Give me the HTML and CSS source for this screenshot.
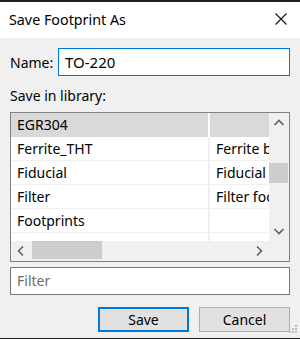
FILE: index.html
```html
<!DOCTYPE html>
<html lang="en">
<head>
    <meta charset="UTF-8">
    <title>Save Footprint As</title>
    <link rel="stylesheet" href="styles.css">
</head>
<body>
    <div class="dialog">
        <div class="titlebar">
            <span class="title">Save Footprint As</span>
            <svg class="close" width="12" height="12" viewBox="0 0 12 12">
                <path d="M0.5 0.5 L11.5 11.5 M11.5 0.5 L0.5 11.5" stroke="#111" stroke-width="1.1" fill="none"/>
            </svg>
        </div>
        <div class="content">
            <div class="name-row">
                <label>Name:</label>
                <div class="name-input">TO-220</div>
            </div>
            <div class="lib-label">Save in library:</div>
            <div class="listbox">
                <div class="rows">
                    <div class="row header"><span class="c1">EGR304</span><span class="c2"></span></div>
                    <div class="row"><span class="c1">Ferrite_THT</span><span class="c2">Ferrite bead</span></div>
                    <div class="row"><span class="c1">Fiducial</span><span class="c2">Fiducial marks</span></div>
                    <div class="row"><span class="c1">Filter</span><span class="c2">Filter footprints</span></div>
                    <div class="row"><span class="c1">Footprints</span><span class="c2"></span></div>
                    <div class="row"><span class="c1"></span><span class="c2"></span></div>
                </div>
                <div class="vscroll">
                    <svg width="20" height="20" viewBox="0 0 20 20"><polyline points="5.5,12 10,7.5 14.5,12" stroke="#606060" stroke-width="1.6" fill="none"/></svg>
                    <div class="vtrack"><div class="vthumb"></div></div>
                    <svg width="20" height="20" viewBox="0 0 20 20"><polyline points="5.5,8 10,12.5 14.5,8" stroke="#606060" stroke-width="1.6" fill="none"/></svg>
                </div>
                <div class="hscroll">
                    <svg width="20" height="20" viewBox="0 0 20 20"><polyline points="12,5.5 7.5,10 12,14.5" stroke="#606060" stroke-width="1.6" fill="none"/></svg>
                    <div class="htrack"><div class="hthumb"></div></div>
                    <svg width="20" height="20" viewBox="0 0 20 20"><polyline points="8,5.5 12.5,10 8,14.5" stroke="#606060" stroke-width="1.6" fill="none"/></svg>
                </div>
                <div class="corner"></div>
            </div>
            <div class="filter">Filter</div>
            <div class="buttons">
                <button class="btn default">Save</button>
                <button class="btn">Cancel</button>
            </div>
        </div>
        <svg class="grip" width="9" height="9" viewBox="0 0 9 9">
            <rect x="6" y="0" width="2" height="2" fill="#bcbcbc"/>
            <rect x="3" y="3" width="2" height="2" fill="#bcbcbc"/>
            <rect x="6" y="3" width="2" height="2" fill="#bcbcbc"/>
            <rect x="0" y="6" width="2" height="2" fill="#bcbcbc"/>
            <rect x="3" y="6" width="2" height="2" fill="#bcbcbc"/>
            <rect x="6" y="6" width="2" height="2" fill="#bcbcbc"/>
        </svg>
    </div>
</body>
</html>
```

FILE: styles.css
```css
body {
    margin: 0;
    font-family: 'Noto Sans', 'Open Sans', sans-serif;
    font-size: 14px;
    color: #000;
    background: #f0f0f0;
}
.dialog {
    position: relative;
    width: 300px;
    height: 339px;
    box-sizing: border-box;
    border-top: 2px solid #1e1e1e;
    border-bottom: 1px solid #1e1e1e;
    background: #f0f0f0;
}
.titlebar {
    height: 36px;
    background: white;
    display: flex;
    align-items: center;
    justify-content: space-between;
    padding: 0 13px 0 9px;
}
.title {
    font-size: 14.3px;
    margin-top: -2px;
}
.close {
    margin-top: -2px;
}
.content {
    padding: 10px 10px 0 10px;
}
.name-row {
    display: flex;
    align-items: center;
}
.name-row label {
    width: 48px;
}
.name-input {
    flex: 1;
    height: 28px;
    box-sizing: border-box;
    border: 1px solid #0078d7;
    background: white;
    padding: 0 0 0 6px;
    line-height: 26px;
    font-size: 15px;
}
.lib-label {
    margin-top: 10px;
    line-height: 20px;
    margin-bottom: 6px;
}
.listbox {
    height: 150px;
    box-sizing: border-box;
    border: 1px solid #828282;
    background: white;
    display: grid;
    grid-template-columns: 258px 20px;
    grid-template-rows: 128px 20px;
}
.rows {
    overflow: hidden;
}
.row {
    display: flex;
    height: 24px;
    box-sizing: border-box;
    border-bottom: 1px solid #f0f0f0;
    line-height: 23px;
}
.row.header {
    background: #d9d9d9;
    border-bottom: none;
    height: 24px;
}
.c1 {
    width: 199px;
    flex: none;
    padding-left: 6px;
    box-sizing: border-box;
    border-right: 2px solid #f0f0f0;
    white-space: nowrap;
}
.header .c1 {
    border-right-color: white;
}
.c2 {
    flex: 1;
    padding-left: 6px;
    white-space: nowrap;
    overflow: hidden;
}
.vscroll {
    background: #f0f0f0;
    display: flex;
    flex-direction: column;
}
.vscroll svg, .hscroll svg {
    flex: none;
    display: block;
}
.vtrack {
    flex: 1;
    padding-top: 30px;
}
.vthumb {
    width: 19px;
    height: 20px;
    background: #cdcdcd;
}
.hscroll {
    background: #f0f0f0;
    display: flex;
}
.htrack {
    flex: 1;
    padding-left: 1px;
}
.hthumb {
    width: 70px;
    height: 18px;
    background: #cdcdcd;
}
.corner {
    background: #f0f0f0;
}
.filter {
    margin-top: 5px;
    height: 28px;
    box-sizing: border-box;
    border: 1px solid #7a7a7a;
    background: white;
    padding-left: 6px;
    line-height: 26px;
    color: #6d6d6d;
}
.buttons {
    margin-top: 12px;
    display: flex;
    justify-content: flex-end;
    gap: 10px;
}
.btn {
    width: 91px;
    height: 25px;
    box-sizing: border-box;
    border: 1px solid #adadad;
    background: #e1e1e1;
    font-family: inherit;
    font-size: 14px;
    padding: 0;
}
.btn.default {
    border: 2px solid #0078d7;
}
.grip {
    position: absolute;
    right: 2px;
    bottom: 4px;
}
```
